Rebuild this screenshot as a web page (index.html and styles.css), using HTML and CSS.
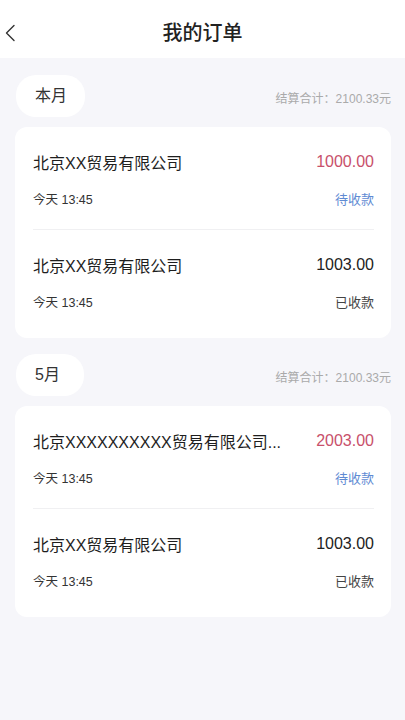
FILE: index.html
```html
<!DOCTYPE html>
<html lang="zh-CN">
<head>
  <meta charset="UTF-8">
  <meta name="viewport" content="width=device-width, initial-scale=1">
  <title>我的订单</title>
  <link rel="stylesheet" href="styles.css">
</head>
<body>
  <div class="header">
    <a class="back" href="#">
      <svg width="12" height="18" viewBox="0 0 12 18"><path d="M10 1.5 L2.5 9 L10 16.5" fill="none" stroke="#333" stroke-width="1.4" stroke-linecap="round" stroke-linejoin="round"/></svg>
    </a>
    <h1>我的订单</h1>
    <span></span>
  </div>

  <div class="main">
    <!-- 本月 -->
    <div class="section">
      <div class="section-head">
        <span class="month">本月</span>
        <span class="total">结算合计：2100.33元</span>
      </div>
      <div class="card">
        <div class="item">
          <div class="row">
            <span class="name">北京XX贸易有限公司</span>
            <span class="amount pending">1000.00</span>
          </div>
          <div class="row sub">
            <span class="time">今天 13:45</span>
            <span class="status pending">待收款</span>
          </div>
        </div>
        <div class="item">
          <div class="row">
            <span class="name">北京XX贸易有限公司</span>
            <span class="amount">1003.00</span>
          </div>
          <div class="row sub">
            <span class="time">今天 13:45</span>
            <span class="status">已收款</span>
          </div>
        </div>
      </div>
    </div>

    <!-- 5月 -->
    <div class="section">
      <div class="section-head">
        <span class="month">5月</span>
        <span class="total">结算合计：2100.33元</span>
      </div>
      <div class="card">
        <div class="item">
          <div class="row">
            <span class="name">北京XXXXXXXXXX贸易有限公司...</span>
            <span class="amount pending">2003.00</span>
          </div>
          <div class="row sub">
            <span class="time">今天 13:45</span>
            <span class="status pending">待收款</span>
          </div>
        </div>
        <div class="item">
          <div class="row">
            <span class="name">北京XX贸易有限公司</span>
            <span class="amount">1003.00</span>
          </div>
          <div class="row sub">
            <span class="time">今天 13:45</span>
            <span class="status">已收款</span>
          </div>
        </div>
      </div>
    </div>
  </div>
</body>
</html>
```

FILE: styles.css
```css
* {
  box-sizing: border-box;
  margin: 0;
  padding: 0;
}

body {
  background-color: #f6f6fa;
  font-family: 'Liberation Sans', 'Noto Sans CJK SC', sans-serif;
  color: #222;
  min-height: 100vh;
}

/* 顶部导航 */
.header {
  height: 58px;
  background-color: #ffffff;
  display: grid;
  grid-template-columns: 40px 1fr 40px;
  align-items: center;
}

.back {
  display: flex;
  align-items: center;
  padding: 8px 0 0 4px;
}

.header h1 {
  text-align: center;
  font-size: 20px;
  font-weight: 500;
  color: #222;
  padding-top: 4px;
}

.main {
  padding: 17px 14px 0 15px;
}

.section + .section {
  margin-top: 16px;
}

.section-head {
  display: flex;
  justify-content: space-between;
  align-items: center;
}

.month {
  display: inline-block;
  height: 42px;
  line-height: 42px;
  padding: 0 18px 0 19px;
  min-width: 68px;
  background-color: #ffffff;
  border-radius: 20px;
  font-size: 16px;
  color: #333;
  margin-left: 1px;
}

.total {
  font-size: 12px;
  color: #aaaaaa;
  padding-top: 2px;
}

.card {
  margin-top: 10px;
  background-color: #ffffff;
  border-radius: 12px;
  padding: 0 17px 0 18px;
}

.item {
  padding: 23px 0 21px;
}

.item + .item {
  border-top: 1px solid #f0f0f2;
  padding-bottom: 27px;
}

.row {
  display: flex;
  justify-content: space-between;
  align-items: center;
  height: 24px;
}

.row.sub {
  height: 20px;
  margin-top: 14px;
}

.name {
  font-size: 16px;
  color: #1e1e1e;
  white-space: nowrap;
  overflow: hidden;
  text-overflow: ellipsis;
  margin-right: 20px;
}

.amount {
  font-size: 16px;
  color: #222;
}

.amount.pending {
  color: #c8506b;
}

.time {
  font-size: 12.5px;
  color: #333;
}

.status {
  font-size: 13px;
  color: #444;
}

.status.pending {
  color: #5f8bd3;
}
```
